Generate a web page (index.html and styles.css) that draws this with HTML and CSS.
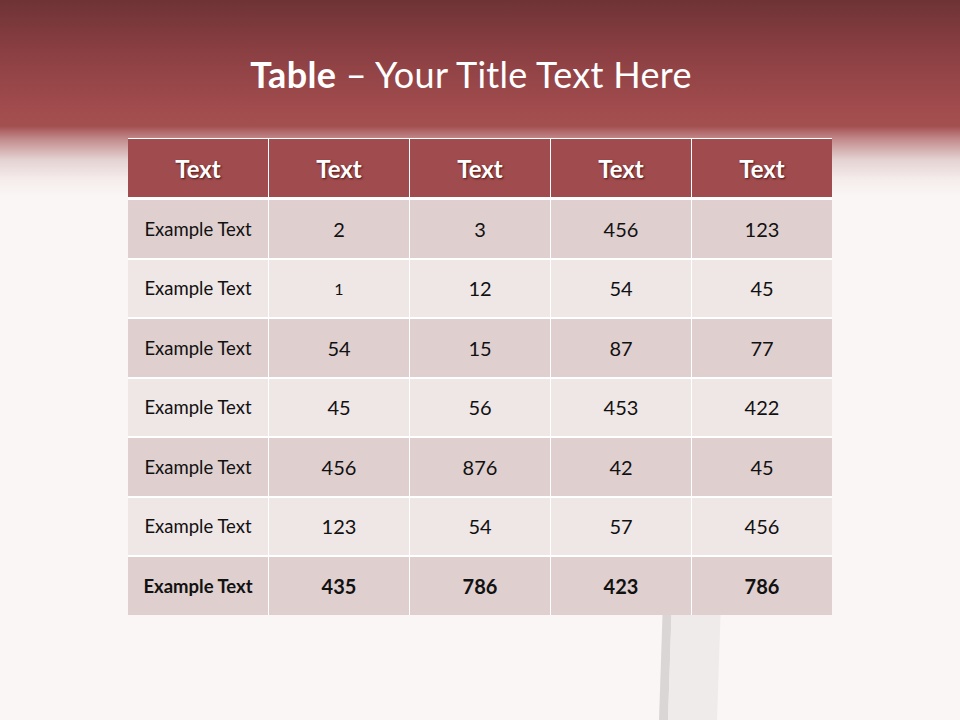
FILE: index.html
```html
<!DOCTYPE html>
<html>
<head>
<meta charset="utf-8">
<link rel="stylesheet" href="styles.css">
</head>
<body>
<div class="slide">
  <svg class="pole" width="70" height="120" viewBox="655 600 70 120">
    <polygon points="663,600 672,600 668,720 659,720" fill="#d9d6d5"/>
    <polygon points="672,600 721,600 717,720 668,720" fill="#eeebea"/>
  </svg>
  <h1 class="title"><b>Table</b> – Your Title Text Here</h1>
  <div class="table">
    <div class="head">
      <div>Text</div><div>Text</div><div>Text</div><div>Text</div><div>Text</div>
    </div>
    <div class="body">
      <div class="row odd"><div class="lbl">Example Text</div><div>2</div><div>3</div><div>456</div><div>123</div></div>
      <div class="row even"><div class="lbl">Example Text</div><div class="small">1</div><div>12</div><div>54</div><div>45</div></div>
      <div class="row odd"><div class="lbl">Example Text</div><div>54</div><div>15</div><div>87</div><div>77</div></div>
      <div class="row even"><div class="lbl">Example Text</div><div>45</div><div>56</div><div>453</div><div>422</div></div>
      <div class="row odd"><div class="lbl">Example Text</div><div>456</div><div>876</div><div>42</div><div>45</div></div>
      <div class="row even"><div class="lbl">Example Text</div><div>123</div><div>54</div><div>57</div><div>456</div></div>
      <div class="row odd total"><div class="lbl">Example Text</div><div>435</div><div>786</div><div>423</div><div>786</div></div>
    </div>
  </div>
</div>
</body>
</html>
```
FILE: styles.css
```css
html, body {
  margin: 0;
  padding: 0;
}
body {
  background: #faf6f5;
  font-family: Lato, "Open Sans", sans-serif;
}
.slide {
  position: relative;
  width: 960px;
  height: 720px;
  overflow: hidden;
  background: linear-gradient(to bottom,
    #6e3336 0px,
    #8a3f42 50px,
    #a24c4e 110px,
    #a34f50 126px,
    #c48e8f 140px,
    #e5d3d3 160px,
    #f5edec 180px,
    #faf6f5 196px);
  display: flex;
  flex-direction: column;
  align-items: center;
}
.pole {
  position: absolute;
  left: 655px;
  top: 600px;
  z-index: 0;
}
.title {
  margin: 0;
  padding-top: 52px;
  padding-right: 18px;
  height: 84px;
  box-sizing: border-box;
  font-size: 36px;
  line-height: 44px;
  font-weight: 400;
  color: #ffffff;
  letter-spacing: 0.3px;
  white-space: nowrap;
}
.title b {
  font-weight: 700;
}
.table {
  position: relative;
  z-index: 1;
  margin-top: 54px;
  width: 704px;
  display: flex;
  flex-direction: column;
}
.head {
  display: grid;
  grid-template-columns: repeat(5, 1fr);
  gap: 1px;
  background: #ffffff;
  padding: 1px 0 3px;
}
.head div {
  background: #a04b4d;
  height: 58px;
  display: flex;
  align-items: center;
  justify-content: center;
  color: #ffffff;
  font-weight: 700;
  font-size: 24px;
  text-shadow: 1px 1px 2px rgba(40, 0, 0, 0.7);
}
.body {
  display: flex;
  flex-direction: column;
  gap: 2px;
  background: #ffffff;
}
.row {
  display: grid;
  grid-template-columns: repeat(5, 1fr);
  gap: 1px;
  height: 57.5px;
}
.row div {
  display: flex;
  align-items: center;
  justify-content: center;
  font-size: 20px;
  color: #111111;
}
.row.odd div {
  background: #dfcfcf;
}
.row.even div {
  background: #efe6e6;
}
.row .lbl {
  font-size: 18.5px;
}
.row .small {
  font-size: 16px;
}
.row.total div {
  font-weight: 700;
}
```
